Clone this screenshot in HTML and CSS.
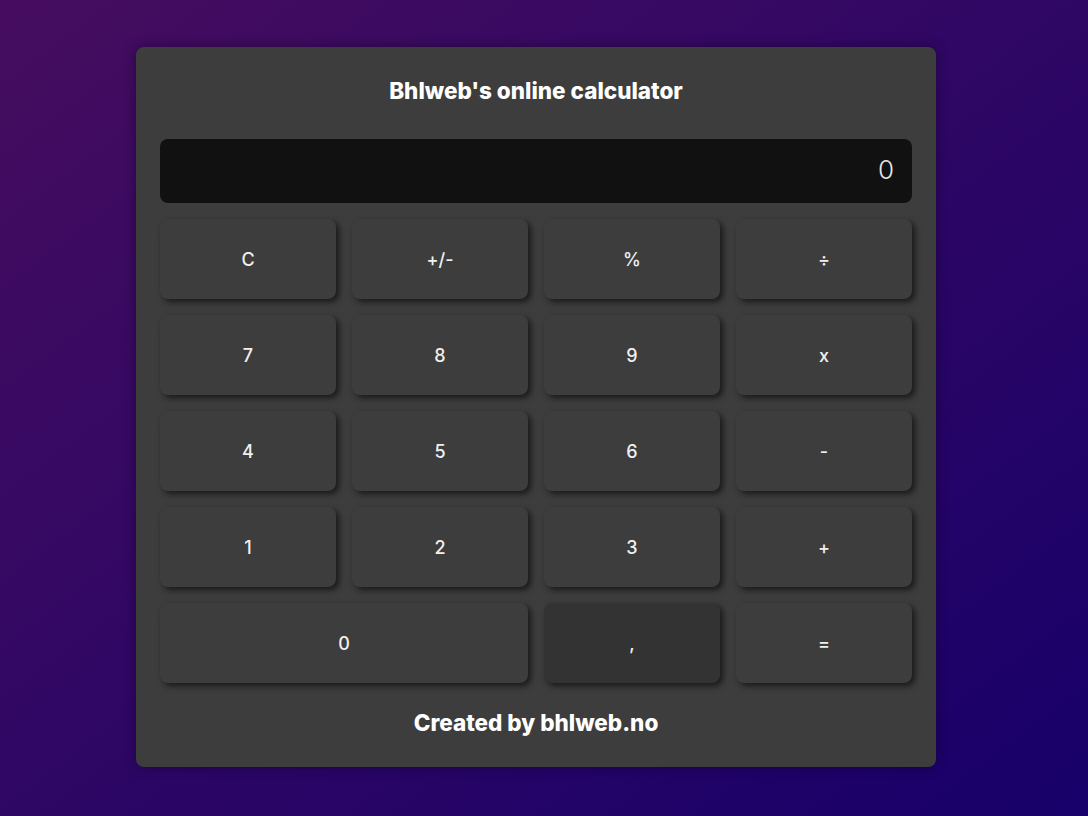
FILE: index.html
```html
<!DOCTYPE html>
<html lang="en">
<head>
<meta charset="utf-8">
<title>Bhlweb's online calculator</title>
<link rel="stylesheet" href="styles.css">
</head>
<body>
<main class="calc">
  <h1 class="calc-title">Bhlweb's online calculator</h1>
  <div class="display">0</div>
  <div class="keys">
    <button class="key">C</button>
    <button class="key">+/-</button>
    <button class="key">%</button>
    <button class="key">÷</button>
    <button class="key">7</button>
    <button class="key">8</button>
    <button class="key">9</button>
    <button class="key">x</button>
    <button class="key">4</button>
    <button class="key">5</button>
    <button class="key">6</button>
    <button class="key">-</button>
    <button class="key">1</button>
    <button class="key">2</button>
    <button class="key">3</button>
    <button class="key">+</button>
    <button class="key key-wide">0</button>
    <button class="key key-dim">,</button>
    <button class="key">=</button>
  </div>
  <p class="calc-footer">Created by bhlweb.no</p>
</main>
</body>
</html>
```
FILE: styles.css
```css
* { box-sizing: border-box; }
html, body { height: 100%; }
body {
  margin: 0;
  min-height: 100vh;
  display: flex;
  align-items: center;
  justify-content: center;
  padding: 0 16px 2px 0;
  background: linear-gradient(to bottom right, #460d5f, #17006a);
  font-family: Inter, "Noto Sans", sans-serif;
  color: #f2f2f2;
}
.calc {
  width: 800px;
  height: 720px;
  background: #3d3d3d;
  border-radius: 8px;
  padding: 24px;
  box-shadow: 0 0 12px rgba(20, 0, 40, 0.6);
  display: flex;
  flex-direction: column;
}
.calc-title {
  margin: 6px 0 34px;
  font-size: 22.5px;
  line-height: 28px;
  font-weight: 800;
  text-align: center;
  color: #ffffff;
}
.display {
  height: 64px;
  background: #111111;
  border-radius: 8px;
  display: flex;
  align-items: center;
  justify-content: flex-end;
  padding: 0 18px 4px;
  font-size: 26px;
  font-weight: 300;
  color: #e6e6e6;
  margin-bottom: 16px;
}
.keys {
  display: grid;
  grid-template-columns: repeat(4, 1fr);
  grid-auto-rows: 80px;
  gap: 16px;
}
.key {
  border: none;
  border-radius: 8px;
  background: #3d3d3d;
  color: #f0f0f0;
  font-family: Inter, "Noto Sans", sans-serif;
  font-size: 18px;
  font-weight: 500;
  box-shadow: 3px 3px 6px rgba(0, 0, 0, 0.6);
  cursor: pointer;
}
.key-wide { grid-column: span 2; }
.key-dim { background: #333333; }
.calc-footer {
  margin: 26px 0 0;
  font-size: 22.5px;
  line-height: 28px;
  font-weight: 800;
  text-align: center;
  color: #ffffff;
}
```
